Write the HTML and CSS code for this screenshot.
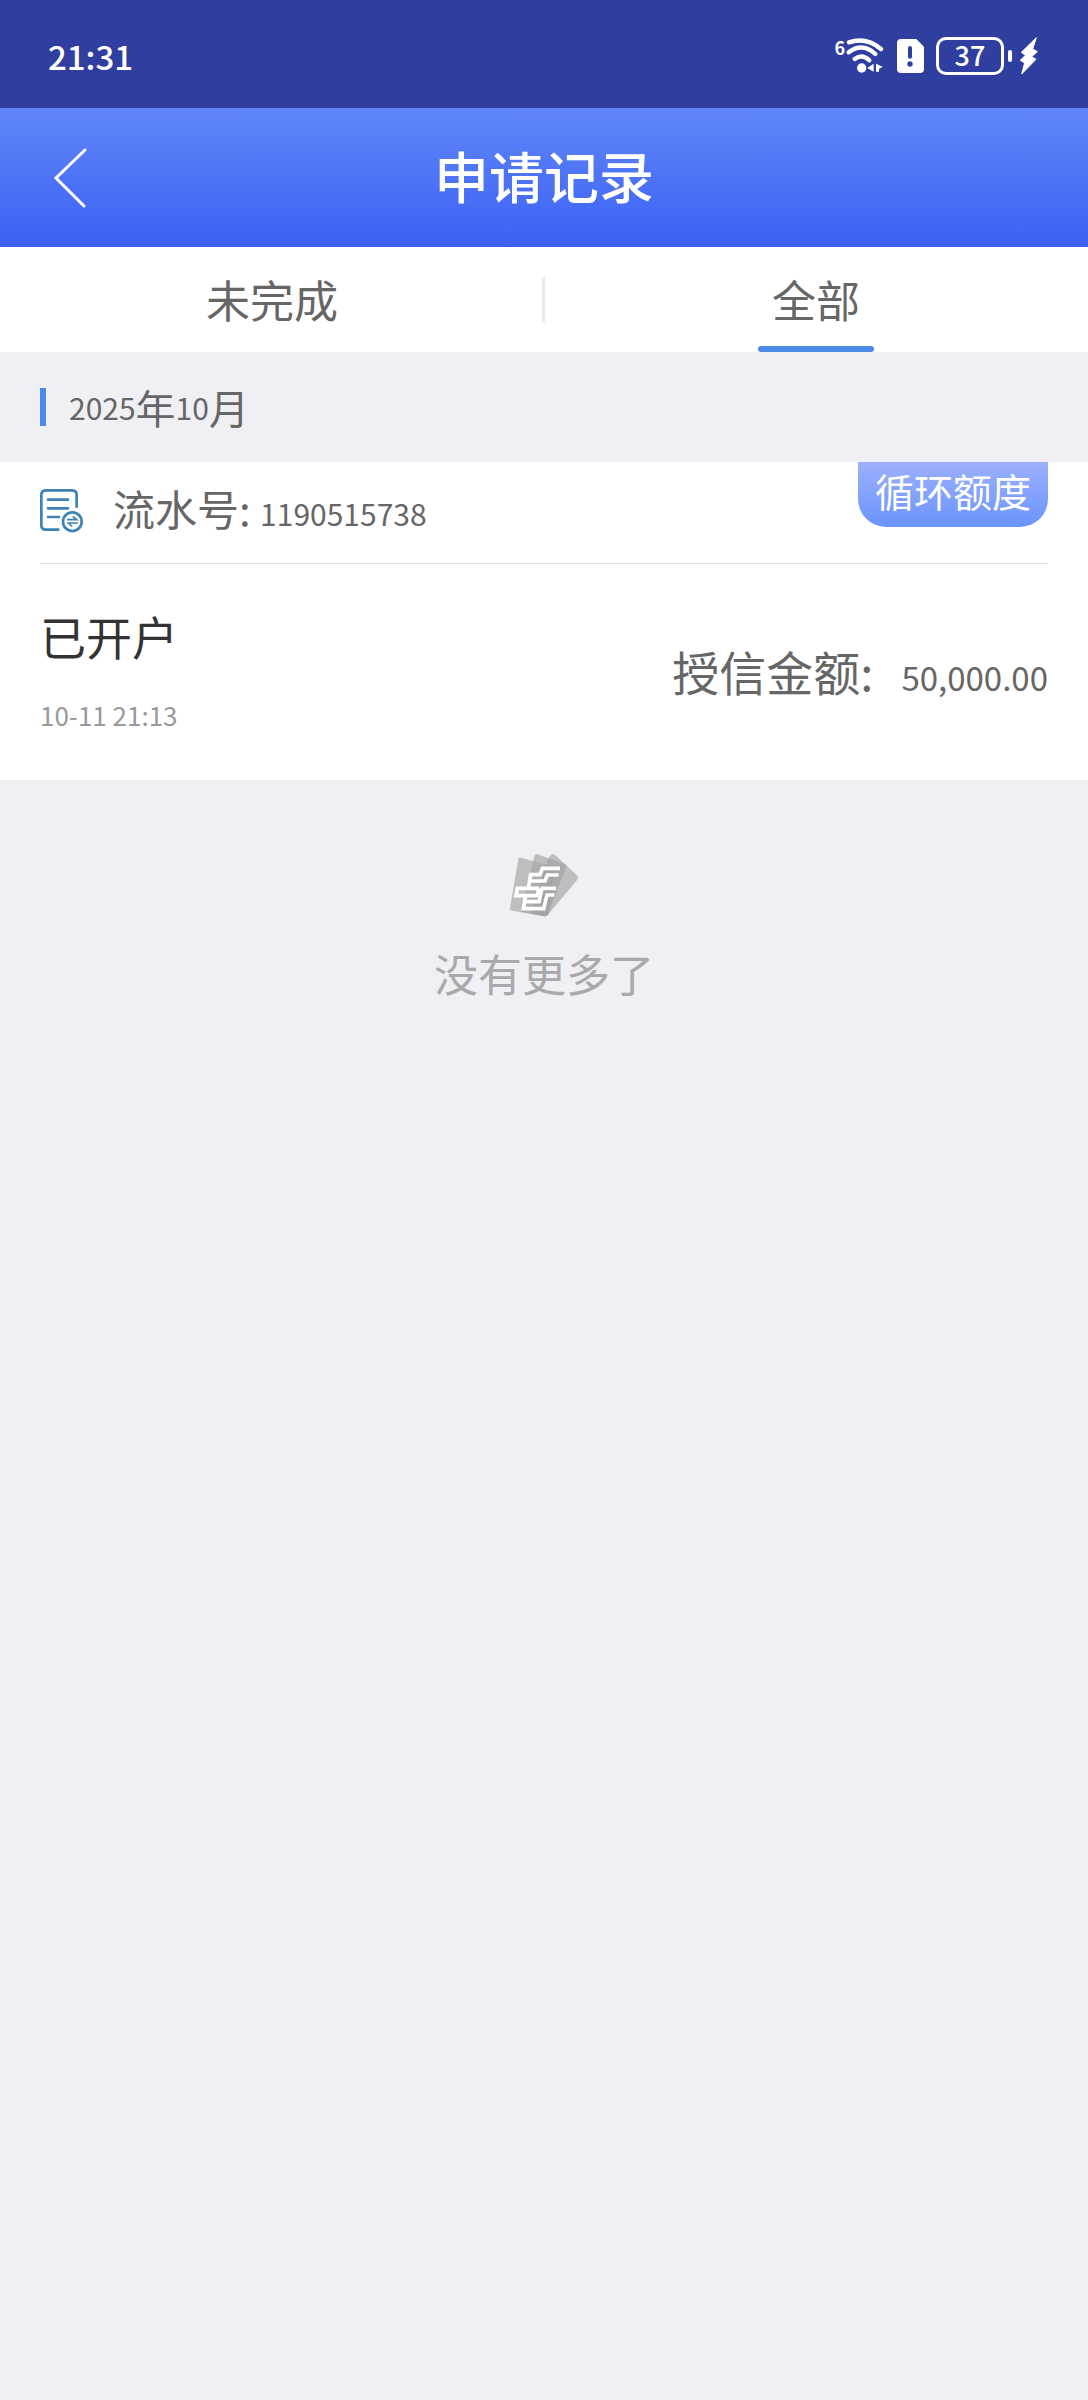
FILE: index.html
```html
<!DOCTYPE html>
<html lang="zh-CN">
<head>
<meta charset="utf-8">
<meta name="viewport" content="width=device-width, initial-scale=1">
<title>申请记录</title>
<link rel="stylesheet" href="styles.css">
</head>
<body>
<div class="status">
  <span class="status-time">21:31</span>
  <div class="status-icons">
    <div class="wifi">
      <span class="wifi-gen">6</span>
      <svg width="40" height="36" viewBox="0 0 120 108" fill="none" stroke="#fff" stroke-linecap="round" aria-hidden="true">
        <g stroke-width="13"><path d="M12 13Q64-4 108 33"/><path d="M11 43Q52 12 91 48"/><path d="M29 63Q52 46 73 67"/></g>
        <circle cx="50" cy="90" r="14" fill="#fff" stroke="none"/>
        <path d="M86 77V101L67 90ZM93 77L113 86L102 93V101H93Z" fill="#fff" stroke="none"/>
      </svg>
    </div>
    <svg width="27" height="34" viewBox="0 0 81 102" aria-hidden="true">
      <path d="M12 0H58L81 23V90Q81 102 69 102H12Q0 102 0 90V12Q0 0 12 0Z" fill="#fff"/>
      <path d="M39 27V53" stroke="#303f9f" stroke-width="12" stroke-linecap="round"/><circle cx="39" cy="75" r="8" fill="#303f9f"/>
    </svg>
    <div class="power">
      <span class="battery">37</span>
      <span class="battery-tip"></span>
      <svg width="18" height="38" viewBox="0 0 54 114" aria-hidden="true"><path d="M49 2L4 46L16 55L1 70L14 78L5 111L48 67L35 59L52 44L38 36Z" fill="#fff" stroke="#fff" stroke-width="3" stroke-linejoin="round"/></svg>
    </div>
  </div>
</div>

<header class="header">
  <button class="back" type="button" aria-label="返回">
    <svg width="36" height="62" viewBox="0 0 36 62" fill="none" stroke="#fff" stroke-width="3" stroke-linecap="round" aria-hidden="true"><path d="M33 3L4 31L32 59"/></svg>
  </button>
  <h1 class="title">申请记录</h1>
</header>

<nav class="tabs">
  <a class="tab" href="#pending">未完成</a>
  <a class="tab tab-active" href="#all" aria-current="page">全部</a>
</nav>

<main>
  <h2 class="month"><span class="num">2025</span>年<span class="num">10</span>月</h2>
  <article class="record">
    <div class="record-head">
      <svg width="44" height="44" viewBox="0 0 132 132" fill="none" stroke="#3c82b4" stroke-width="8" stroke-linecap="round" aria-hidden="true">
        <path d="M58 122H18Q4 122 4 108V18Q4 4 18 4H96Q110 4 110 18V56" stroke-linecap="butt"/>
        <path d="M24 32H84M24 58H84M24 84H57"/>
        <circle cx="97" cy="98" r="28"/>
        <path d="M83 92H110L100 84M112 102H85L95 111" stroke-width="5"/>
      </svg>
      <span class="serial">流水号: <span class="num">1190515738</span></span>
      <span class="badge">循环额度</span>
    </div>
    <div class="record-body">
      <div class="state">
        <strong class="state-name">已开户</strong>
        <time class="state-time" datetime="2025-10-11T21:13">10-11 21:13</time>
      </div>
      <p class="amount">授信金额: <span class="amount-value">50,000.00</span></p>
    </div>
  </article>
  <div class="end">
    <svg width="70" height="64" viewBox="324 68 210 192" aria-hidden="true">
      <path d="M359 82Q353 81 352 87L327 232Q326 239 334 241L430 258Q438 259 442 252L466 110Z" fill="#bebebf"/>
      <path d="M410 72Q403 70 400 77L360 245L430 258Q438 258 442 252L497 104Z" fill="#a8a8a9" opacity=".7"/>
      <path d="M450 73Q457 69 463 75L528 135Q534 141 529 148L440 254Q436 259 428 257L390 250L440 88Z" fill="#a0a0a1" opacity=".62"/>
      <g fill="none" stroke="#fff" stroke-width="11">
        <path d="M477 114H424L417 133H389L382 174"/>
        <path d="M473 134H439L432 152H386"/>
        <path d="M414 174H349L345 196H408L414 174"/>
        <path d="M465 174H423L414 214H372"/>
        <path d="M460 194H438L428 235H367L374 196"/>
      </g>
    </svg>
    <p class="end-text">没有更多了</p>
  </div>
</main>
</body>
</html>
```
FILE: styles.css
```css
* { box-sizing: border-box; }

body {
  margin: 0;
  min-height: 100vh;
  background: #efeff4;
  color: #666;
  font-family: "Noto Sans CJK SC", sans-serif;
}

h1, h2, p { margin: 0; font-weight: 400; }

.status {
  display: flex;
  align-items: center;
  justify-content: space-between;
  height: 108px;
  padding: 4px 50px 0 48px;
  background: #303f9f;
  color: #fff;
}
.status-time { font-size: 33px; font-weight: 500; }
.status-icons { display: flex; align-items: center; gap: 12px; }
.wifi, .power { display: flex; }
.power { align-items: center; gap: 4px; }
.wifi-gen { font-size: 18px; line-height: 18px; font-weight: 700; }
.battery {
  width: 68px;
  height: 38px;
  border: 3px solid #fff;
  border-radius: 10px;
  font-size: 27px;
  line-height: 30px;
  font-weight: 500;
  text-align: center;
}
.battery-tip { width: 4px; height: 12px; margin-right: 4px; border-radius: 2px; background: #fff; }

.header {
  display: grid;
  grid-template-columns: 120px 1fr 120px;
  align-items: center;
  height: 139px;
  background: linear-gradient(#6087f8, #3c60f5);
  color: #fff;
}
.back {
  display: flex;
  align-items: center;
  height: 100%;
  padding: 0 0 0 52px;
  border: 0;
  background: none;
}
.title { padding-bottom: 8px; font-size: 55px; line-height: 80px; font-weight: 500; text-align: center; }

.tabs { display: flex; height: 105px; background: #fff; }
.tab {
  position: relative;
  flex: 1;
  font-size: 44px;
  line-height: 104px;
  color: #666;
  text-align: center;
  text-decoration: none;
}
.tab + .tab::before {
  content: "";
  position: absolute;
  top: 30px;
  left: -2px;
  width: 3px;
  height: 45px;
  background: #ebebef;
}
.tab-active::after {
  content: "";
  position: absolute;
  bottom: 0;
  left: calc(50% - 58px);
  width: 116px;
  height: 6px;
  border-radius: 3px;
  background: #4a8ae8;
}

.month {
  display: flex;
  align-items: center;
  height: 110px;
  padding: 0 40px;
  font-size: 40px;
}
.month::before {
  content: "";
  width: 6px;
  height: 38px;
  margin-right: 23px;
  background: #4a8ae8;
}
.num { font-size: 30px; }

.record { padding: 0 40px; background: #fff; }
.record-head {
  display: flex;
  align-items: center;
  height: 102px;
  padding-bottom: 4px;
  border-bottom: 1px solid #e2e4e6;
}
.serial { margin-left: 29px; font-size: 42px; line-height: 60px; }
.badge {
  align-self: flex-start;
  margin-left: auto;
  width: 190px;
  height: 65px;
  border-radius: 0 0 28px 28px;
  background: linear-gradient(#9cb0fd, #6b94fe);
  color: #fff;
  font-size: 39px;
  line-height: 56px;
  text-align: center;
}
.record-body {
  display: flex;
  align-items: center;
  justify-content: space-between;
  height: 216px;
  padding-bottom: 4px;
}
.state { display: flex; flex-direction: column; gap: 30px; }
.state-name { color: #333; font-size: 46px; line-height: 60px; font-weight: 400; }
.state-time { color: #999; font-size: 26px; line-height: 40px; }
.amount { display: flex; align-items: baseline; gap: 28px; font-size: 47px; }
.amount-value { font-size: 33px; }

.end {
  display: flex;
  flex-direction: column;
  align-items: center;
  gap: 24px;
  padding: 73px 40px;
}
.end-text { color: #a9a9ac; font-size: 44px; line-height: 64px; }
```
